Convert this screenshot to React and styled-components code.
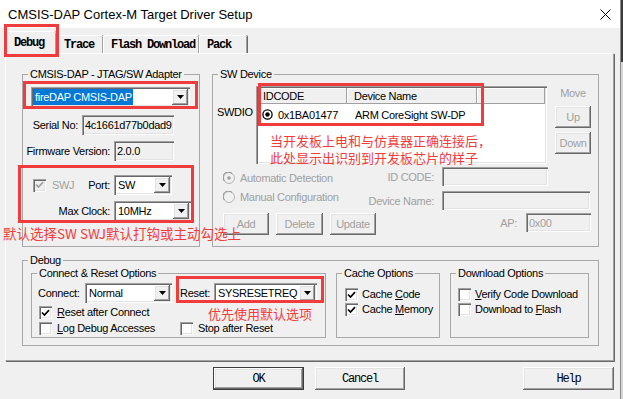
import styled, { createGlobalStyle, css } from "styled-components";

const UI = `"Liberation Sans", Arial, sans-serif`;
const MONO = `"Liberation Mono", "Courier New", monospace`;
const CJK = `"Noto Sans CJK SC", "Noto Sans", sans-serif`;
const RED = "#f03c3c";
const GRAY = "#a0a0a0";

const GlobalStyle = createGlobalStyle`
  html, body { margin: 0; padding: 0; }
  body {
    font-family: ${UI};
    background: linear-gradient(#3a3a3a 0, #3a3a3a 62px, #d6d6d6 62px);
  }
`;

const sunken = css`
  box-shadow: inset 1px 1px #a0a0a0, inset 2px 2px #696969,
    inset -1px -1px #ffffff, inset -2px -2px #e3e3e3;
`;

const raised = css`
  box-shadow: inset -1px -1px #696969, inset 1px 1px #ffffff,
    inset -2px -2px #a0a0a0, inset 2px 2px #e3e3e3;
`;

const Window = styled.div`
  width: 620px;
  height: 399px;
  display: flex;
  flex-direction: column;
  background: #f0f0f0;
  border-right: 1px solid #8c8c8c;
  font-family: ${UI};
  font-size: 11px;
  letter-spacing: -0.3px;
  color: #000;
  overflow: hidden;
`;

const TitleBar = styled.div`
  height: 28px;
  flex: none;
  background: #fff;
  display: flex;
  align-items: center;
  justify-content: space-between;
  padding: 0 9px 0 8px;
`;

const Title = styled.div`
  font-size: 13px;
  letter-spacing: 0;
`;

const TabRow = styled.div`
  height: 25px;
  flex: none;
  display: flex;
  align-items: flex-end;
  padding-left: 5px;
  position: relative;
  z-index: 1;
`;

const Tab = styled.div`
  width: ${(p) => p.$w}px;
  height: ${(p) => (p.$active ? 23 : 18)}px;
  margin-bottom: ${(p) => (p.$active ? -1 : 0)}px;
  box-sizing: border-box;
  display: flex;
  align-items: center;
  padding-left: ${(p) => (p.$active ? 8 : 7)}px;
  background: #f0f0f0;
  border-top: 1px solid #fff;
  border-left: 1px solid #fff;
  border-top-left-radius: 2px;
  border-top-right-radius: 2px;
  box-shadow: inset -1px 0 #a0a0a0, 1px 0 #696969;
  font-family: ${MONO};
  font-size: 12px;
  font-weight: bold;
  letter-spacing: -1.2px;
`;

const Mark = styled.div`
  position: relative;
  width: fit-content;
  &::after {
    content: "";
    position: absolute;
    pointer-events: none;
    top: ${(p) => -p.$t}px;
    left: ${(p) => -p.$l}px;
    right: ${(p) => -p.$r}px;
    bottom: ${(p) => -p.$b}px;
    border: 3px solid ${RED};
    z-index: 3;
  }
`;

const RedBox = styled.div`
  position: absolute;
  left: ${(p) => p.$x}px;
  top: ${(p) => p.$y}px;
  width: ${(p) => p.$w}px;
  height: ${(p) => p.$h}px;
  box-sizing: border-box;
  border: 3px solid ${RED};
  pointer-events: none;
`;

const Note = styled.div`
  font-family: ${CJK};
  font-size: ${(p) => p.$size || 13}px;
  line-height: ${(p) => p.$lh || 17}px;
  letter-spacing: 0;
  color: ${RED};
  white-space: nowrap;
`;

const FloatNote = styled(Note)`
  position: absolute;
  left: -26px;
  top: 48px;
`;

const Panel = styled.div`
  flex: none;
  margin: 0 6px 0 5px;
  height: 308px;
  box-sizing: border-box;
  border-top: 1px solid #fff;
  border-left: 1px solid #fff;
  border-right: 1px solid #a0a0a0;
  border-bottom: 1px solid #a0a0a0;
  box-shadow: 1px 1px #696969;
  padding: 13px 13px 0 16px;
  display: flex;
  flex-direction: column;
  gap: 6px;
`;

const TopRow = styled.div`
  display: flex;
  gap: 12px;
`;

const Group = styled.fieldset`
  margin: 0;
  padding: 0;
  min-width: 0;
  width: ${(p) => p.$w}px;
  height: ${(p) => p.$h}px;
  box-sizing: border-box;
  border: 1px solid #a8a8a8;
  flex: none;
`;

const Legend = styled.legend`
  padding: 0 2px;
  margin-left: 5px;
  line-height: 14px;
  font-size: 11px;
`;

const Stack = styled.div`
  display: flex;
  flex-direction: column;
`;

const Combo = styled.div`
  width: ${(p) => p.$w}px;
  height: 20px;
  box-sizing: border-box;
  background: #fff;
  ${sunken};
  padding: 2px;
  display: flex;
  flex: none;
`;

const ComboText = styled.div`
  flex: 1;
  display: flex;
  align-items: stretch;
  overflow: hidden;
  white-space: nowrap;
  & > span {
    display: flex;
    align-items: center;
    padding: 0 1px 0 2px;
  }
`;

const Selected = styled.span`
  background: #0078d7;
  color: #fff;
`;

const ComboButton = styled.div`
  width: 16px;
  background: #f0f0f0;
  ${raised};
  display: flex;
  align-items: center;
  justify-content: center;
`;

const Field = styled.div`
  width: ${(p) => p.$w}px;
  height: ${(p) => p.$h || 20}px;
  box-sizing: border-box;
  background: #f0f0f0;
  ${sunken};
  padding: 0 2px 0 3px;
  display: flex;
  align-items: center;
  overflow: hidden;
  white-space: nowrap;
  color: ${(p) => (p.$dim ? GRAY : "#000")};
  flex: none;
`;

const FieldRow = styled.div`
  display: flex;
  justify-content: flex-end;
  align-items: center;
  gap: 4px;
  padding-right: 25px;
  margin-top: ${(p) => p.$mt}px;
`;

const AdapterMark = styled(Mark)`
  margin: 6px 0 0 8px;
`;

const SwjMark = styled(Mark)`
  margin: 14px 0 0 6px;
`;

const SwjGrid = styled.div`
  display: grid;
  grid-template-columns: 81px auto;
  column-gap: 4px;
  row-gap: 6px;
  align-items: center;
`;

const Between = styled.div`
  display: flex;
  justify-content: space-between;
  align-items: center;
`;

const RightLabel = styled.div`
  justify-self: end;
  color: ${(p) => (p.$dim ? GRAY : "#000")};
`;

const CheckItem = styled.label`
  display: flex;
  align-items: center;
  gap: ${(p) => p.$gap || 5}px;
  line-height: 13px;
  margin-left: ${(p) => p.$ml || 0}px;
  color: ${(p) => (p.$dim ? GRAY : "#000")};
  white-space: nowrap;
`;

const Box = styled.span`
  width: 13px;
  height: 13px;
  box-sizing: border-box;
  background: ${(p) => (p.$dim ? "#f0f0f0" : "#fff")};
  ${sunken};
  display: flex;
  align-items: center;
  justify-content: center;
  flex: none;
`;

const SwTop = styled.div`
  display: flex;
  margin-top: 5px;
  padding-left: 4px;
`;

const SwdioLabel = styled.div`
  width: 39px;
  padding-top: 19px;
  line-height: 14px;
`;

const Table = styled.div`
  width: 291px;
  height: 78px;
  box-sizing: border-box;
  background: #fff;
  ${sunken};
  padding: 2px;
  position: relative;
`;

const TableRow = styled.div`
  display: grid;
  grid-template-columns: 89px 130px 1fr;
  height: ${(p) => p.$h}px;
  align-items: stretch;
`;

const HeadCell = styled.div`
  background: #f0f0f0;
  box-shadow: inset -1px -1px #a0a0a0, inset 1px 1px #fff;
  display: flex;
  align-items: center;
  padding-left: ${(p) => p.$pl || 5}px;
`;

const Cell = styled.div`
  display: flex;
  align-items: center;
  gap: 5px;
  padding-left: ${(p) => p.$pl}px;
  white-space: nowrap;
`;

const TableNote = styled.div`
  margin-top: 7px;
  padding-left: 12px;
`;

const MoveCol = styled.div`
  width: 36px;
  margin-left: 8px;
  display: flex;
  flex-direction: column;
  align-items: stretch;
`;

const MoveLabel = styled.div`
  text-align: center;
  line-height: 14px;
  color: ${GRAY};
`;

const Button = styled.div`
  width: ${(p) => p.$w}px;
  height: ${(p) => p.$h || 22}px;
  box-sizing: border-box;
  margin-top: ${(p) => p.$mt || 0}px;
  background: #f0f0f0;
  ${raised};
  display: flex;
  align-items: center;
  justify-content: center;
  color: ${(p) => (p.$dim ? GRAY : "#000")};
  flex: none;
`;

const SwLower = styled.div`
  margin-top: 3px;
  padding: 0 7px 0 10px;
`;

const SwGrid = styled.div`
  display: grid;
  grid-template-columns: 145px 74px auto;
  row-gap: 5px;
  align-items: center;
`;

const LabelCell = styled.div`
  text-align: right;
  padding-right: 8px;
  color: ${GRAY};
  white-space: nowrap;
`;

const RadioCell = styled(CheckItem)`
  align-self: start;
  margin-top: ${(p) => p.$mt}px;
  line-height: 14px;
`;

const ActionRow = styled.div`
  display: flex;
  align-items: flex-start;
  gap: 7px;
  margin-top: 3px;
`;

const ApGroup = styled.div`
  margin-left: auto;
  display: flex;
  align-items: center;
  gap: 9px;
  color: ${GRAY};
`;

const DebugRow = styled.div`
  display: flex;
  margin-top: -1px;
  padding-left: 8px;
  gap: 10px;
`;

const CrRow = styled.div`
  display: grid;
  grid-template-columns: 134px auto;
  column-gap: 8px;
  align-items: ${(p) => (p.$top ? "start" : "center")};
  height: ${(p) => p.$h}px;
  margin-top: ${(p) => p.$mt || 0}px;
  padding-left: 6px;
`;

const ComboLine = styled.div`
  display: flex;
  align-items: center;
  justify-content: ${(p) => (p.$spread ? "space-between" : "flex-start")};
  gap: 4px;
`;

const ResetNote = styled(Note)`
  margin-left: 28px;
`;

const CheckList = styled.div`
  display: flex;
  flex-direction: column;
  margin-top: 8px;
  padding-left: ${(p) => p.$pl}px;
  & > * {
    height: 15px;
    align-items: flex-start;
  }
`;

const ButtonRow = styled.div`
  display: flex;
  margin-top: 6px;
  padding: 0 6px 0 213px;
  gap: 11px;
`;

const DialogButton = styled.div`
  width: ${(p) => p.$w}px;
  height: 23px;
  box-sizing: border-box;
  margin-left: ${(p) => (p.$end ? "auto" : "0")};
  background: #f0f0f0;
  border: ${(p) => (p.$default ? "1px solid #3c3c3c" : "none")};
  ${raised};
  display: flex;
  align-items: center;
  justify-content: center;
  font-family: ${MONO};
  font-size: 12px;
  letter-spacing: -1.2px;
`;

function Arrow() {
  return (
    <svg width="7" height="4" viewBox="0 0 7 4">
      <polygon points="0,0 7,0 3.5,4" fill="#000" />
    </svg>
  );
}

function Dropdown({ w, children, selected }) {
  return (
    <Combo $w={w}>
      <ComboText>
        {selected ? <Selected>{children}</Selected> : <span>{children}</span>}
      </ComboText>
      <ComboButton>
        <Arrow />
      </ComboButton>
    </Combo>
  );
}

function Check({ checked, dim }) {
  return (
    <Box $dim={dim}>
      {checked && (
        <svg width="9" height="8" viewBox="0 0 9 8">
          <path
            d="M1 3.5 L3.5 6 L8 1.2"
            fill="none"
            stroke={dim ? GRAY : "#000"}
            strokeWidth="1.7"
          />
        </svg>
      )}
    </Box>
  );
}

function Radio({ checked }) {
  return (
    <svg width="12" height="12" viewBox="0 0 12 12">
      <circle cx="6" cy="6" r="5.5" fill="#f0f0f0" stroke="#b4b4b4" />
      <path d="M1.5 9 A5 5 0 0 1 9 1.5" fill="none" stroke="#8a8a8a" />
      {checked && <circle cx="6" cy="6" r="1.8" fill="#a0a0a0" />}
    </svg>
  );
}

function Target() {
  return (
    <svg width="11" height="11" viewBox="0 0 11 11">
      <circle cx="5.5" cy="5.5" r="4.6" fill="#fff" stroke="#000" strokeWidth="1.3" />
      <circle cx="5.5" cy="5.5" r="2.2" fill="#000" />
    </svg>
  );
}

export default function App() {
  return (
    <>
      <GlobalStyle />
      <Window>
        <TitleBar>
          <Title>CMSIS-DAP Cortex-M Target Driver Setup</Title>
          <svg width="11" height="11" viewBox="0 0 11 11">
            <path d="M0.5 0.5 L10.5 10.5 M10.5 0.5 L0.5 10.5" stroke="#000" strokeWidth="1" />
          </svg>
        </TitleBar>

        <TabRow>
          <Mark $t={7} $l={1} $r={3} $b={4}>
            <Tab $active $w={51}>Debug</Tab>
          </Mark>
          <Tab $w={47}>Trace</Tab>
          <Tab $w={96}>Flash Download</Tab>
          <Tab $w={48}>Pack</Tab>
        </TabRow>

        <Panel>
          <TopRow>
            <Group $w={178} $h={180}>
              <Legend>CMSIS-DAP - JTAG/SW Adapter</Legend>
              <Stack>
                <AdapterMark $t={6} $l={8} $r={8} $b={2}>
                  <Dropdown w={159} selected>
                    fireDAP CMSIS-DAP
                  </Dropdown>
                </AdapterMark>
                <FieldRow $mt={8}>
                  <span>Serial No:</span>
                  <Field $w={92}>4c1661d77b0dad9</Field>
                </FieldRow>
                <FieldRow $mt={6}>
                  <span>Firmware Version:</span>
                  <Field $w={60}>2.0.0</Field>
                </FieldRow>
                <SwjMark $t={10} $l={11} $r={3} $b={2}>
                  <SwjGrid>
                    <Between>
                      <CheckItem $dim $gap={6} $ml={4}>
                        <Check checked dim />
                        SWJ
                      </CheckItem>
                      <span>Port:</span>
                    </Between>
                    <Dropdown w={58}>SW</Dropdown>
                    <RightLabel>Max Clock:</RightLabel>
                    <Dropdown w={77}>10MHz</Dropdown>
                  </SwjGrid>
                  <FloatNote $size={13.5} $lh={20}>
                    默认选择SW SWJ默认打钩或主动勾选上
                  </FloatNote>
                </SwjMark>
              </Stack>
            </Group>

            <Group $w={387} $h={180}>
              <Legend>SW Device</Legend>
              <SwTop>
                <SwdioLabel>SWDIO</SwdioLabel>
                <Table>
                  <TableRow $h={16}>
                    <HeadCell>IDCODE</HeadCell>
                    <HeadCell $pl={7}>Device Name</HeadCell>
                    <HeadCell />
                  </TableRow>
                  <TableRow $h={21}>
                    <Cell $pl={4}>
                      <Target />
                      0x1BA01477
                    </Cell>
                    <Cell $pl={8}>ARM CoreSight SW-DP</Cell>
                  </TableRow>
                  <TableNote>
                    <Note>当开发板上电和与仿真器正确连接后，</Note>
                    <Note>此处显示出识别到开发板芯片的样子</Note>
                  </TableNote>
                  <RedBox $x={2} $y={-3} $w={226} $h={43} />
                </Table>
                <MoveCol>
                  <MoveLabel>Move</MoveLabel>
                  <Button $w={36} $mt={6} $dim>Up</Button>
                  <Button $w={36} $mt={4} $dim>Down</Button>
                </MoveCol>
              </SwTop>
              <SwLower>
                <SwGrid>
                  <RadioCell $dim $mt={4}>
                    <Radio checked />
                    Automatic Detection
                  </RadioCell>
                  <LabelCell>ID CODE:</LabelCell>
                  <Field $w={106} $h={19} />
                  <RadioCell $dim $mt={-1}>
                    <Radio />
                    Manual Configuration
                  </RadioCell>
                  <LabelCell>Device Name:</LabelCell>
                  <Field $w={148} $h={19} />
                </SwGrid>
                <ActionRow>
                  <Button $w={46} $dim>Add</Button>
                  <Button $w={47} $dim>Delete</Button>
                  <Button $w={46} $dim>Update</Button>
                  <ApGroup>
                    AP:
                    <Field $w={65} $h={19} $dim>0x00</Field>
                  </ApGroup>
                </ActionRow>
              </SwLower>
            </Group>
          </TopRow>

          <Group $w={577} $h={93}>
            <Legend>Debug</Legend>
            <DebugRow>
              <Group $w={295} $h={72}>
                <Legend>Connect &amp; Reset Options</Legend>
                <CrRow $h={20} $mt={3}>
                  <ComboLine $spread>
                    Connect:
                    <Dropdown w={87}>Normal</Dropdown>
                  </ComboLine>
                  <Mark $t={7} $l={4} $r={7} $b={0}>
                    <ComboLine>
                      Reset:
                      <Dropdown w={103}>SYSRESETREQ</Dropdown>
                    </ComboLine>
                  </Mark>
                </CrRow>
                <CrRow $h={16} $mt={3} $top>
                  <CheckItem $ml={1}>
                    <Check checked />
                    <span>
                      <u>R</u>eset after Connect
                    </span>
                  </CheckItem>
                  <ResetNote $lh={16}>优先使用默认选项</ResetNote>
                </CrRow>
                <CrRow $h={16} $top>
                  <CheckItem $ml={1}>
                    <Check />
                    <span>
                      <u>L</u>og Debug Accesses
                    </span>
                  </CheckItem>
                  <CheckItem>
                    <Check />
                    Stop after Reset
                  </CheckItem>
                </CrRow>
              </Group>

              <Group $w={104} $h={72}>
                <Legend>Cache Options</Legend>
                <CheckList $pl={8}>
                  <CheckItem $gap={4}>
                    <Check checked />
                    <span>
                      Cache <u>C</u>ode
                    </span>
                  </CheckItem>
                  <CheckItem $gap={4}>
                    <Check checked />
                    <span>
                      Cache <u>M</u>emory
                    </span>
                  </CheckItem>
                </CheckList>
              </Group>

              <Group $w={139} $h={72}>
                <Legend>Download Options</Legend>
                <CheckList $pl={7}>
                  <CheckItem $gap={4}>
                    <Check />
                    <span>
                      <u>V</u>erify Code Download
                    </span>
                  </CheckItem>
                  <CheckItem $gap={4}>
                    <Check />
                    <span>
                      Download to <u>F</u>lash
                    </span>
                  </CheckItem>
                </CheckList>
              </Group>
            </DebugRow>
          </Group>
        </Panel>

        <ButtonRow>
          <DialogButton $w={91} $default>OK</DialogButton>
          <DialogButton $w={90}>Cancel</DialogButton>
          <DialogButton $w={91} $end>Help</DialogButton>
        </ButtonRow>
      </Window>
    </>
  );
}
